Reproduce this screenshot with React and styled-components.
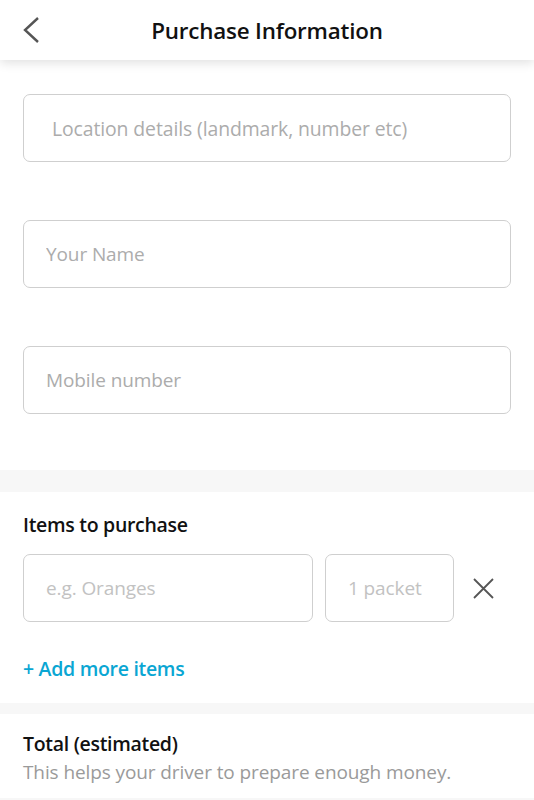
import styled, { createGlobalStyle } from "styled-components";

const GlobalStyle = createGlobalStyle`
  body {
    margin: 0;
    background: #fff;
    font-family: "Open Sans", "Noto Sans", sans-serif;
    color: #111;
  }
  * { box-sizing: border-box; }
`;

const Page = styled.div`
  width: 534px;
  min-height: 800px;
  overflow: hidden;
`;

const Header = styled.header`
  height: 60px;
  display: grid;
  grid-template-columns: 60px 1fr 60px;
  align-items: center;
  background: #fff;
  box-shadow: 0 3px 10px rgba(0, 0, 0, 0.12);
  position: relative;
  z-index: 1;
`;

const BackButton = styled.button`
  border: none;
  background: none;
  padding: 0 0 0 22px;
  height: 60px;
  display: flex;
  align-items: center;
  cursor: pointer;
  svg { display: block; }
`;

const Title = styled.h1`
  margin: 0;
  text-align: center;
  font-size: 22.4px;
  font-weight: 600;
  letter-spacing: -0.2px;
  color: #111;
`;

const Form = styled.section`
  padding: 34px 23px 56px;
  display: flex;
  flex-direction: column;
  gap: 58px;
`;

const Field = styled.input`
  width: ${(p) => p.$width || "100%"};
  height: 68px;
  border: 1.5px solid #cfcfcf;
  border-radius: 7px;
  padding: 0 0 0 ${(p) => p.$pad || 22}px;
  font-family: inherit;
  font-size: ${(p) => p.$size || 19}px;
  letter-spacing: -0.1px;
  color: #333;
  background: #fff;
  outline: none;
  flex: none;
  &::placeholder {
    color: ${(p) => (p.$light ? "#c2c2c2" : "#acacac")};
  }
`;

const Divider = styled.div`
  height: ${(p) => p.$h}px;
  background: #f7f7f7;
`;

const Section = styled.section`
  padding: ${(p) => p.$pad};
`;

const SectionTitle = styled.h2`
  margin: 0;
  font-size: 19.5px;
  font-weight: 600;
  letter-spacing: -0.3px;
  color: #111;
  line-height: 24px;
`;

const ItemRow = styled.div`
  margin-top: 17px;
  display: flex;
  align-items: center;
  gap: 12px;
`;

const RemoveButton = styled.button`
  border: none;
  background: none;
  padding: 0;
  width: 34px;
  height: 34px;
  display: flex;
  align-items: center;
  justify-content: center;
  cursor: pointer;
`;

const AddMore = styled.button`
  margin-top: 33px;
  border: none;
  background: none;
  padding: 0;
  font-family: inherit;
  font-size: 19.5px;
  font-weight: 600;
  letter-spacing: -0.3px;
  color: #0aa6d3;
  cursor: pointer;
`;

const Hint = styled.p`
  margin: 4px 0 0;
  font-size: 19px;
  letter-spacing: -0.1px;
  color: #9a9a9a;
  line-height: 24px;
`;

export default function App() {
  return (
    <Page>
      <GlobalStyle />
      <Header>
        <BackButton aria-label="Back">
          <svg width="18" height="28" viewBox="0 0 18 28">
            <path d="M16 2 L3 14 L16 26" fill="none" stroke="#555" strokeWidth="2.4" />
          </svg>
        </BackButton>
        <Title>Purchase Information</Title>
        <div />
      </Header>

      <Form>
        <Field placeholder="Location details (landmark, number etc)" $pad={28} $size={19.4} />
        <Field placeholder="Your Name" />
        <Field placeholder="Mobile number" />
      </Form>

      <Divider $h={22} />

      <Section $pad="21px 23px 21px">
        <SectionTitle>Items to purchase</SectionTitle>
        <ItemRow>
          <Field placeholder="e.g. Oranges" $width="290px" $light />
          <Field placeholder="1 packet" $width="129px" $light />
          <RemoveButton aria-label="Remove item">
            <svg width="21" height="21" viewBox="0 0 21 21">
              <path d="M1 1 L20 20 M20 1 L1 20" stroke="#555" strokeWidth="1.8" />
            </svg>
          </RemoveButton>
        </ItemRow>
        <AddMore>+ Add more items</AddMore>
      </Section>

      <Divider $h={11} />

      <Section $pad="18px 23px 14px">
        <SectionTitle>Total (estimated)</SectionTitle>
        <Hint>This helps your driver to prepare enough money.</Hint>
      </Section>
      <Divider $h={10} />
    </Page>
  );
}
